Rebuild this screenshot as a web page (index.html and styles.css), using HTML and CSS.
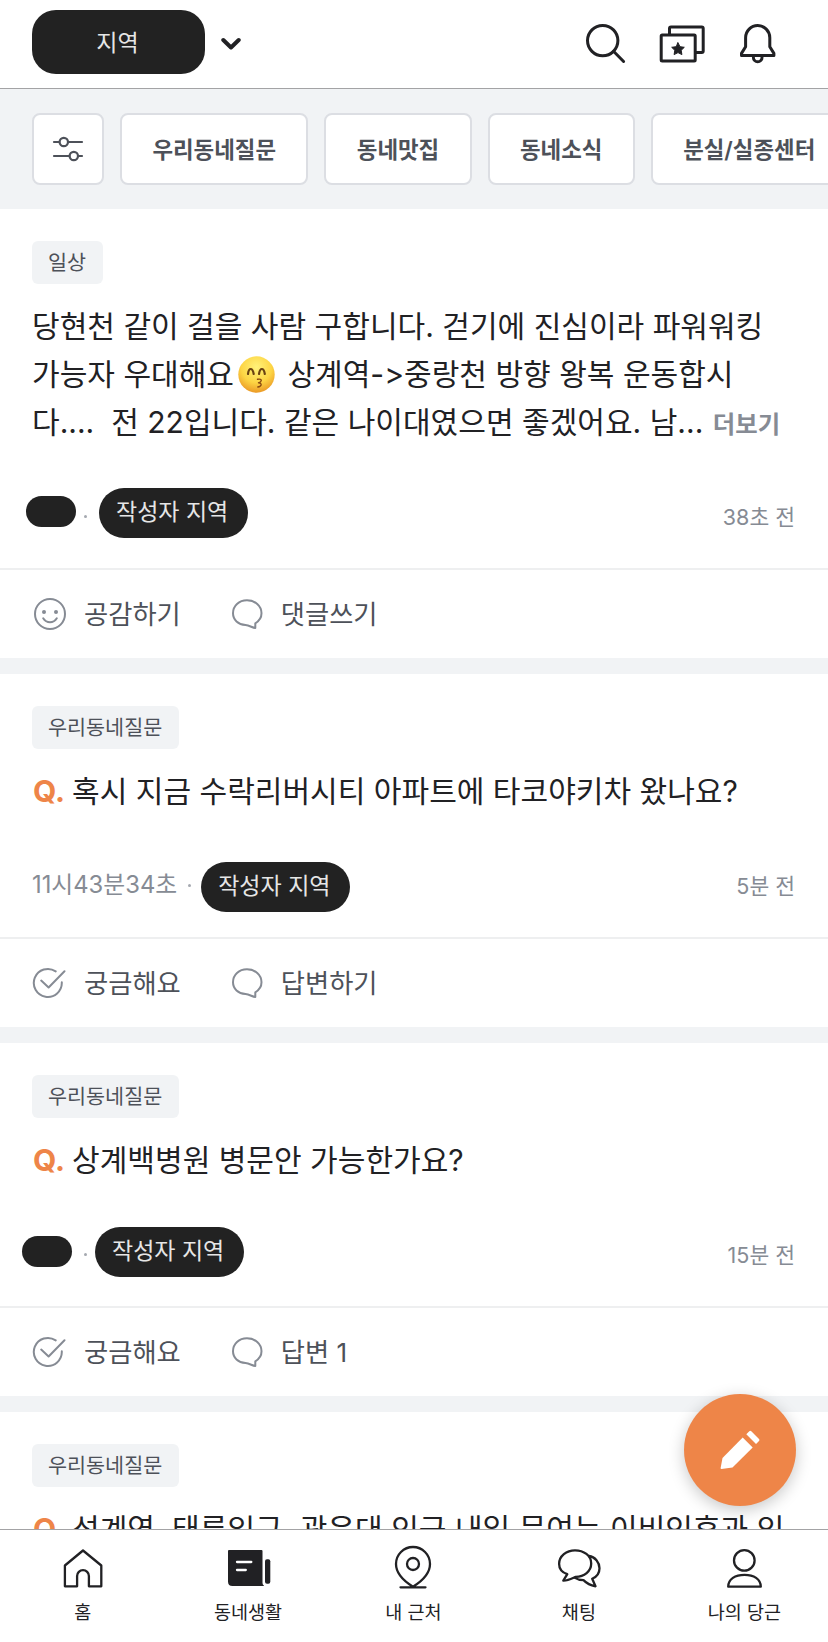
FILE: index.html
```html
<!DOCTYPE html>
<html lang="ko">
<head>
    <meta charset="UTF-8">
    <meta name="viewport" content="width=device-width, initial-scale=1.0">
    <title>동네생활</title>
    <link rel="stylesheet" href="styles.css">
</head>
<body>
    <!-- shared icons -->
    <svg class="defs" width="0" height="0">
        <symbol id="icon-comment" viewBox="0 0 36 36">
            <path d="M26.3 27.3C30.2 25 32.5 21.5 32.5 17.3 32.5 9.8 26 4.3 18 4.3S4 9.8 4 17.3c0 6.6 5.2 11.3 12.5 11.8 3.6.3 6.5 2.3 9.8 3z"/>
        </symbol>
        <symbol id="icon-check" viewBox="0 0 36 36">
            <path d="M23.7 6.4A14 14 0 1 0 29.8 17.3M9.2 15.6l7.4 6.9L32.5 6.2"/>
        </symbol>
    </svg>

    <header class="header">
        <button class="region">지역</button>
        <svg class="chevron" width="20" height="14" viewBox="0 0 20 14"><path d="M2.3 3l7.7 7.5L17.7 3"/></svg>
        <div class="header-icons">
            <svg width="48" height="48" viewBox="0 0 48 48">
                <circle cx="20.7" cy="20.6" r="15.2"/>
                <path d="M31.5 31.3L41.6 41.5"/>
            </svg>
            <svg width="48" height="48" viewBox="0 0 48 48">
                <path d="M11.5 14V8.5q0-1.5 1.5-1.5h30.7q1.5 0 1.5 1.5V31q0 1.5-1.5 1.5H38"/>
                <rect x="3.2" y="15" width="34" height="26" rx="1"/>
                <path class="star" d="M20 22.8l2 3.9 4.3.6-3.1 3 .7 4.3-3.9-2-3.9 2 .7-4.3-3.1-3 4.3-.6z"/>
            </svg>
            <svg width="48" height="48" viewBox="0 0 48 48">
                <path d="M11.6 26.7v-9a12.1 12.1 0 0 1 24.2 0v9l4.1 6.7v2.2H7.5v-2.2z"/>
                <path d="M19.4 37.4a4.3 4.3 0 0 0 8.6 0"/>
            </svg>
        </div>
    </header>

    <nav class="filters">
        <button class="chip chip-icon">
            <svg width="36" height="36" viewBox="0 0 36 36">
                <path d="M4 11h5.3M18.2 11H32M4 25h15.5M28.3 25H32"/>
                <circle cx="13.8" cy="11" r="4.2"/>
                <circle cx="23.8" cy="25" r="4.2"/>
            </svg>
        </button>
        <button class="chip">우리동네질문</button>
        <button class="chip">동네맛집</button>
        <button class="chip">동네소식</button>
        <button class="chip">분실/실종센터</button>
    </nav>

    <main class="feed">
        <article class="post">
            <div class="post-body">
                <span class="tag">일상</span>
                <p class="text">당현천 같이 걸을 사람 구합니다. 걷기에 진심이라 파워워킹<br>가능자 우대해요<svg class="emoji" width="37" height="37" viewBox="0 0 37 37">
                    <defs>
                        <radialGradient id="face" cx="50%" cy="30%" r="70%">
                            <stop offset="0" stop-color="#fff27a"/>
                            <stop offset="0.6" stop-color="#fdd544"/>
                            <stop offset="1" stop-color="#eb9a26"/>
                        </radialGradient>
                    </defs>
                    <circle cx="18.5" cy="18.5" r="18.2" fill="url(#face)"/>
                    <path d="M10 18q.6-5 2.7-5t3 5M21 18q.8-5 2.900-5t2.900 5" fill="none" stroke="#6b4312" stroke-width="2.2" stroke-linecap="round"/>
                    <path d="M19.5 23.3q4-.6 3.8 1.2-.2 1.5-2.8 2.3 3 .3 2.6 2-.4 1.8-3.3 2.2" fill="none" stroke="#8a4a12" stroke-width="1.4" stroke-linecap="round"/>
                </svg> 상계역-&gt;중랑천 방향 왕복 운동합시<br>다....&nbsp; 전 22입니다. 같은 나이대였으면 좋겠어요. 남... <span class="more">더보기</span></p>
                <div class="meta">
                    <span class="hidden-name"></span>
                    <span class="dot"></span>
                    <span class="area">작성자 지역</span>
                    <span class="time">38초 전</span>
                </div>
            </div>
            <div class="actions">
                <span class="action">
                    <svg width="36" height="36" viewBox="0 0 36 36">
                        <circle cx="18" cy="18" r="15"/>
                        <path d="M11.2 22.3q2.5 4 6.8 4t6.8-4"/>
                        <circle class="eye" cx="12" cy="16" r="2"/>
                        <circle class="eye" cx="24" cy="16" r="2"/>
                    </svg>
                    공감하기
                </span>
                <span class="action"><svg width="36" height="36"><use href="#icon-comment"/></svg>댓글쓰기</span>
            </div>
        </article>

        <article class="post">
            <div class="post-body">
                <span class="tag">우리동네질문</span>
                <p class="text"><b class="q">Q.</b>혹시 지금 수락리버시티 아파트에 타코야키차 왔나요?</p>
                <div class="meta meta-named">
                    <span class="name">11시43분34초</span>
                    <span class="dot"></span>
                    <span class="area">작성자 지역</span>
                    <span class="time">5분 전</span>
                </div>
            </div>
            <div class="actions">
                <span class="action"><svg width="36" height="36"><use href="#icon-check"/></svg>궁금해요</span>
                <span class="action"><svg width="36" height="36"><use href="#icon-comment"/></svg>답변하기</span>
            </div>
        </article>

        <article class="post">
            <div class="post-body">
                <span class="tag">우리동네질문</span>
                <p class="text"><b class="q">Q.</b>상계백병원 병문안 가능한가요?</p>
                <div class="meta meta-wide">
                    <span class="hidden-name"></span>
                    <span class="dot"></span>
                    <span class="area">작성자 지역</span>
                    <span class="time">15분 전</span>
                </div>
            </div>
            <div class="actions">
                <span class="action"><svg width="36" height="36"><use href="#icon-check"/></svg>궁금해요</span>
                <span class="action"><svg width="36" height="36"><use href="#icon-comment"/></svg>답변 1</span>
            </div>
        </article>

        <article class="post">
            <div class="post-body">
                <span class="tag">우리동네질문</span>
                <p class="text"><b class="q">Q.</b>석계역, 태릉입구, 광운대 인근 내일 문여는 이비인후과 있</p>
            </div>
        </article>
    </main>

    <button class="write">
        <svg width="112" height="112" viewBox="0 0 112 112">
            <path d="M38.5 64L58.7 43.5l10 10L48.5 73.5l-11 1.5q-1 0-.9-1z"/>
            <path d="M62.3 40.2l3-3q1-1 2 0l7.7 7.7q1 1 0 2l-3 3z"/>
        </svg>
    </button>

    <nav class="tabs">
        <a class="tab">
            <svg width="48" height="48" viewBox="0 0 48 48"><path d="M24 6.5L42.3 21.5v20.8H29.9V32a5.9 5.9 0 0 0-11.8 0v10.3H5.9V21.5z"/></svg>
            홈
        </a>
        <a class="tab">
            <svg class="solid" width="48" height="48" viewBox="0 0 48 48">
                <path d="M4 7q0-1 1-1h32.5q1 0 1 1v32q0 1.5 1.5 2.7V42H8.5Q4 42 4 37.5z"/>
                <rect x="41" y="15.3" width="5.3" height="24.4" rx="2"/>
                <path class="lines" d="M13 18h14.3M13 26h8.8"/>
            </svg>
            동네생활
        </a>
        <a class="tab">
            <svg width="48" height="48" viewBox="0 0 48 48">
                <path d="M24 42.7C14 36.5 7 28.5 7 20a17 17 0 0 1 34 0c0 8.5-7 16.5-17 22.7zM11.5 43.3h25"/>
                <circle cx="24" cy="20" r="6"/>
            </svg>
            내 근처
        </a>
        <a class="tab">
            <svg width="48" height="48" viewBox="0 0 48 48">
                <path d="M20 6.3c8.8 0 16.2 5.2 16.2 13.2 0 7.8-7 13.3-15.5 13.3-4 1.8-7.5 4-12.4 3.9l4-6.5C7 28.5 4.1 25 4.1 19.8 4.1 12 11.5 6.3 20 6.3z"/>
                <path d="M34 12c6 .8 10.500 6.500 10.500 12.300 0 4.700-3 8.700-7.300 10.500l3.300 7.500c-5-.9-8.500-2.600-12-6.200-3.500 0-6.500-.8-9-2.500"/>
            </svg>
            채팅
        </a>
        <a class="tab">
            <svg width="48" height="48" viewBox="0 0 48 48">
                <circle cx="24.3" cy="16.4" r="10.3"/>
                <path d="M8.2 42.7C8.2 35 15.3 30.8 24.5 30.8S40.8 35 40.8 42.7z"/>
            </svg>
            나의 당근
        </a>
    </nav>
</body>
</html>
```

FILE: styles.css
```css
* {
    box-sizing: border-box;
}
body {
    margin: 0;
    height: 100vh;
    display: flex;
    flex-direction: column;
    overflow: hidden;
    position: relative;
    background-color: #fff;
    color: #212124;
    font-family: Inter, "Noto Sans CJK KR", sans-serif;
}
button {
    font-family: inherit;
    padding: 0;
    border: none;
}
svg {
    flex: none;
    fill: none;
    stroke-linejoin: round;
    stroke-linecap: round;
}
.defs {
    position: absolute;
}

/* header */
.header {
    flex: none;
    height: 89px;
    padding: 0 46px 0 32px;
    display: flex;
    align-items: center;
    border-bottom: 1px solid #a3a3a5;
}
.region {
    width: 173px;
    height: 64px;
    margin-bottom: 4px;
    padding: 0 2px 2px 0;
    border-radius: 24px;
    background-color: #222;
    color: #e6e6e6;
    font-size: 23px;
}
.chevron {
    margin-left: 16px;
    stroke: #212124;
    stroke-width: 4;
}
.header-icons {
    margin-left: auto;
    display: flex;
    gap: 28px;
    stroke: #212124;
    stroke-width: 3;
}
.star {
    fill: #212124;
    stroke-width: 1;
}

/* category chips */
.filters {
    flex: none;
    height: 120px;
    padding: 24px 0 0 32px;
    display: flex;
    gap: 16px;
    background-color: #f1f3f5;
}
.chip {
    flex: none;
    height: 72px;
    padding: 0 30.4px 3px;
    border: 2px solid #dcdee3;
    border-radius: 8px;
    background-color: #fff;
    color: #4d5159;
    font-size: 22.4px;
    font-weight: 600;
}
.chip-icon {
    width: 72px;
    padding: 0;
    display: flex;
    align-items: center;
    justify-content: center;
    stroke: #4d5159;
    stroke-width: 2.2;
}

/* posts */
.feed {
    flex: 1;
    min-height: 0;
    overflow: hidden;
}
.post {
    border-bottom: 16px solid #f1f3f5;
}
.post-body {
    padding: 32px 33px 0 32px;
}
.tag {
    display: block;
    width: fit-content;
    height: 43px;
    padding: 0 17px 0 16px;
    border-radius: 6px;
    background-color: #f1f3f5;
    color: #4d5159;
    font-size: 20.7px;
    line-height: 44px;
}
.text {
    margin: 18px 0 0;
    font-size: 30.05px;
    line-height: 48px;
    white-space: nowrap;
}
.emoji {
    margin-left: 4px;
    margin-right: 4px;
    vertical-align: -8px;
}
.more {
    margin-left: 1px;
    color: #868b94;
    font-size: 24.4px;
    font-weight: 600;
    line-height: 0;
}
.q {
    margin-left: 1px;
    margin-right: 7px;
    color: #ee8548;
}
.meta {
    height: 122px;
    padding: 18px 0 0;
    display: flex;
    align-items: center;
    color: #868b94;
    font-size: 22px;
}
.hidden-name {
    width: 50px;
    height: 31px;
    margin: 0 8px 10px -6px;
    border-radius: 16px;
    background-color: #222;
}
.dot {
    width: 3px;
    height: 3px;
    border-radius: 50%;
    background-color: #a5a9b0;
}
.area {
    height: 50px;
    margin: 0 0 7px 12px;
    padding: 0 20px 0 17px;
    border-radius: 25px;
    background-color: #222;
    color: #e6e6e6;
    font-size: 23px;
    line-height: 49px;
}
.time {
    margin-left: auto;
    padding-bottom: 2px;
    font-size: 21.5px;
}
.meta-named .name {
    margin-right: 11px;
    margin-bottom: 6px;
    font-size: 23.8px;
}
.meta-named .area {
    margin-left: 10px;
    margin-bottom: -4px;
}
.meta-wide .hidden-name {
    margin-left: -10px;
    margin-right: 12px;
    margin-bottom: 6px;
}
.meta-wide .area {
    margin-left: 8px;
    margin-bottom: 5px;
}
.actions {
    height: 90px;
    padding-left: 32px;
    display: flex;
    gap: 48px;
    border-top: 2px solid #eeeff0;
}
.action {
    padding-bottom: 4px;
    display: flex;
    align-items: center;
    gap: 16px;
    color: #4d5159;
    font-size: 26.3px;
}
.action svg {
    margin-top: 4px;
    stroke: #868b94;
    stroke-width: 2;
}
.action .eye {
    fill: #868b94;
    stroke: none;
}

/* floating button */
.write {
    position: absolute;
    right: 32px;
    bottom: 136px;
    width: 112px;
    height: 112px;
    border-radius: 50%;
    background-color: #ee8548;
    box-shadow: 0 4px 16px rgba(0, 0, 0, 0.22);
}
.write svg {
    display: block;
    fill: #fff;
}

/* bottom tabs */
.tabs {
    flex: none;
    height: 113px;
    padding: 14px 1px 0 0;
    display: grid;
    grid-template-columns: repeat(5, 1fr);
    border-top: 1px solid #a3a3a5;
    background-color: #fff;
}
.tab {
    display: flex;
    flex-direction: column;
    align-items: center;
    font-size: 18.5px;
    line-height: 40px;
}
.tab svg {
    stroke: #212124;
    stroke-width: 2.3;
}
.tab .solid {
    fill: #212124;
    stroke: none;
}
.tab .lines {
    stroke: #fff;
    stroke-width: 2.3;
}
```
